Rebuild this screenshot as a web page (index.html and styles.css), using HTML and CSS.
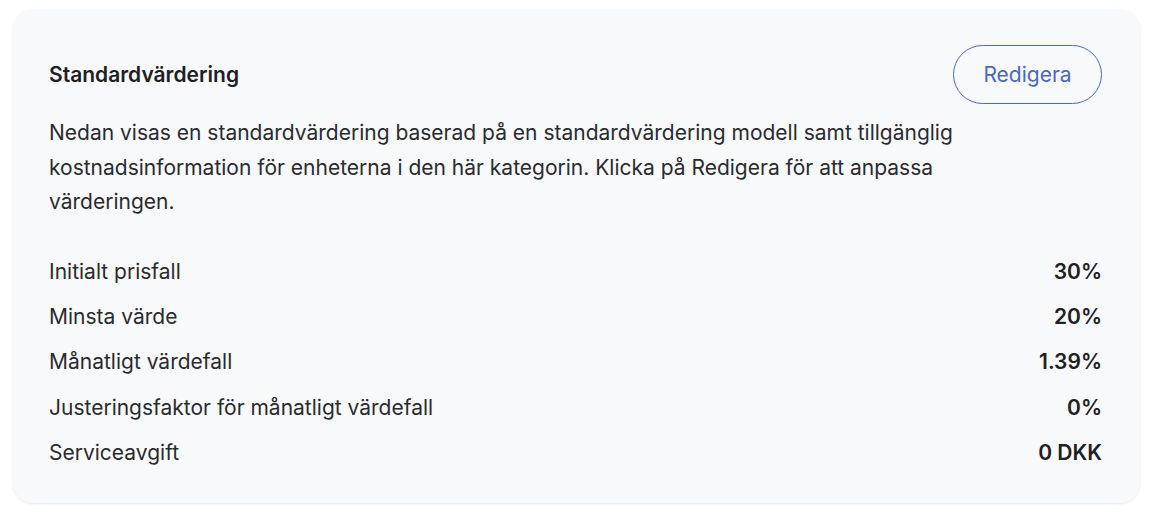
FILE: index.html
```html
<!DOCTYPE html>
<html lang="sv">
<head>
<meta charset="utf-8">
<link rel="stylesheet" href="styles.css">
</head>
<body>
<section class="card">
  <div class="header">
    <h2 class="title">Standardvärdering</h2>
    <button class="edit-btn">Redigera</button>
  </div>
  <p class="desc">Nedan visas en standardvärdering baserad på en standardvärdering modell samt tillgänglig kostnadsinformation för enheterna i den här kategorin. Klicka på Redigera för att anpassa värderingen.</p>
  <dl class="rows">
    <div class="row"><dt>Initialt prisfall</dt><dd>30%</dd></div>
    <div class="row"><dt>Minsta värde</dt><dd>20%</dd></div>
    <div class="row"><dt>Månatligt värdefall</dt><dd>1.39%</dd></div>
    <div class="row"><dt>Justeringsfaktor för månatligt värdefall</dt><dd>0%</dd></div>
    <div class="row"><dt>Serviceavgift</dt><dd>0 DKK</dd></div>
  </dl>
</section>
</body>
</html>
```

FILE: styles.css
```css
* { box-sizing: border-box; }
html, body { background: #ffffff; }
body {
  margin: 0;
  padding: 9px 12px 15px 13px;
  font-family: Inter, "Noto Sans", sans-serif;
  color: #222326;
}
.card {
  background: #f8f9fb;
  border-radius: 20px;
  box-shadow: 0 1px 3px rgba(0, 0, 0, 0.06), 0 1px 2px rgba(0, 0, 0, 0.03);
  padding: 36px 38px 28px 36px;
  height: 494px;
}
.header {
  display: flex;
  align-items: center;
  justify-content: space-between;
}
.title {
  margin: 0;
  font-size: 21px;
  font-weight: 600;
  color: #1f2023;
}
.edit-btn {
  font-family: inherit;
  font-size: 21px;
  color: #4a66cf;
  background: transparent;
  border: 1px solid #4a66cf;
  border-radius: 999px;
  width: 149px;
  height: 59px;
  padding: 0;
}
.desc {
  margin: 12px 0 0;
  max-width: 940px;
  font-size: 21px;
  line-height: 34.5px;
  color: #2a2b2e;
}
.rows {
  margin: 29px 0 0;
  display: flex;
  flex-direction: column;
}
.row {
  display: flex;
  justify-content: space-between;
  align-items: center;
  height: 45.3px;
  font-size: 21px;
}
.row dt { color: #2a2b2e; }
.row dd { margin: 0; font-weight: 600; color: #1f2023; }
```
